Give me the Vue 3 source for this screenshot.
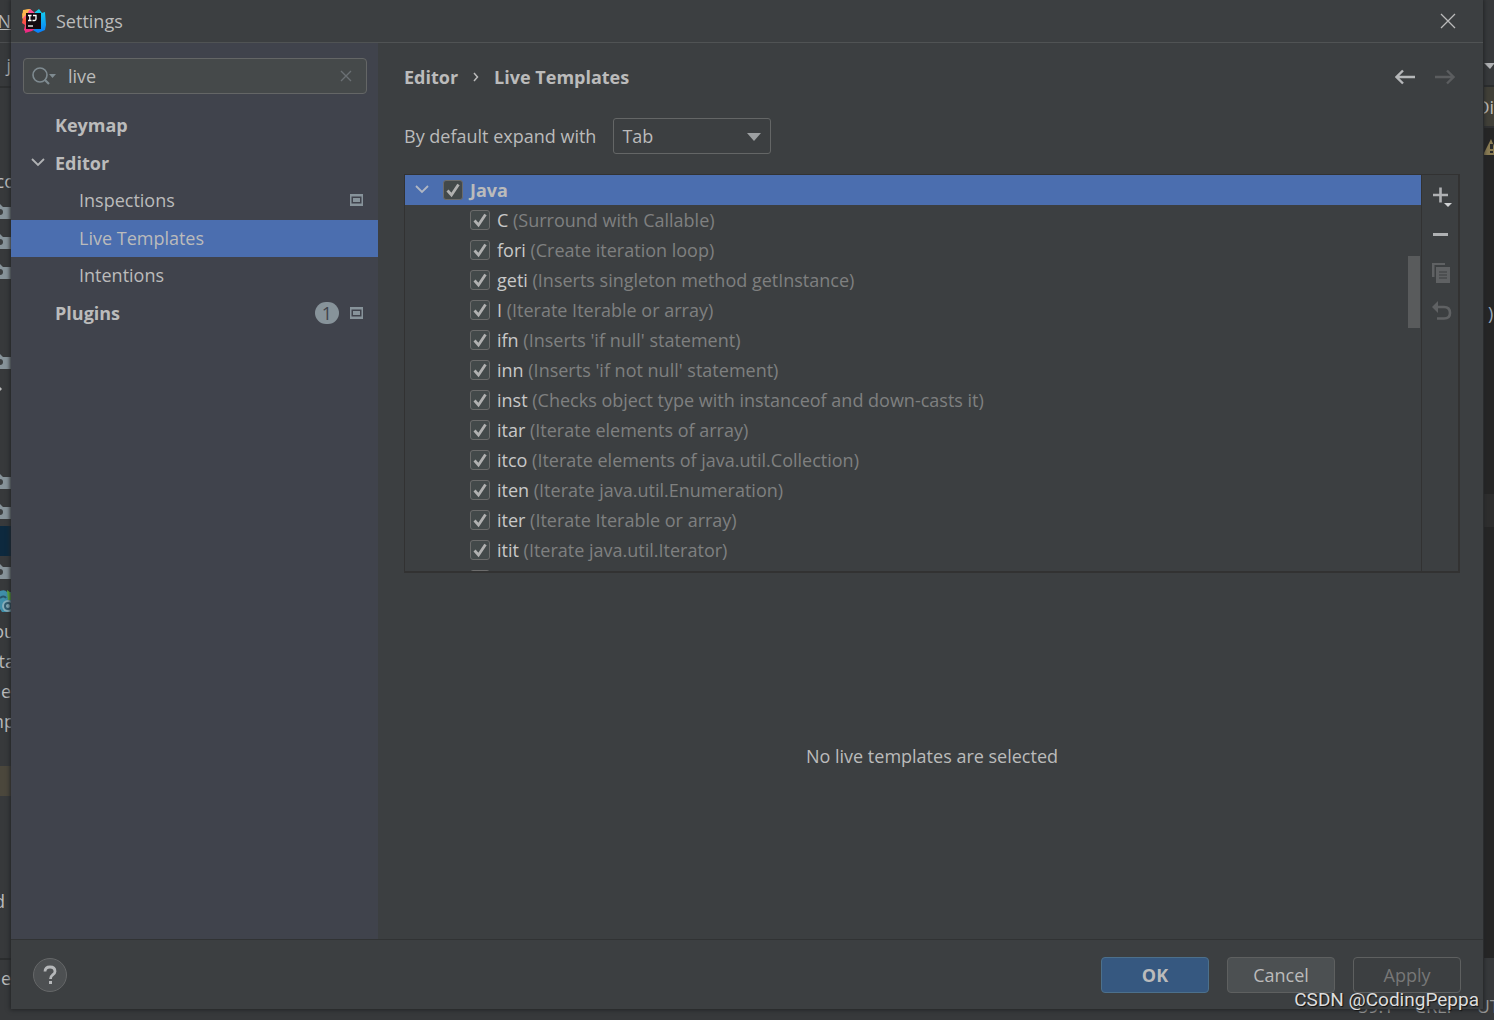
<script setup>
import { ref, reactive } from 'vue'

const query = ref('live')
const expandKey = ref('Tab')
const javaOn = ref(true)

const templates = reactive([
  ['C', 'Surround with Callable'],
  ['fori', 'Create iteration loop'],
  ['geti', 'Inserts singleton method getInstance'],
  ['I', 'Iterate Iterable or array'],
  ['ifn', "Inserts 'if null' statement"],
  ['inn', "Inserts 'if not null' statement"],
  ['inst', 'Checks object type with instanceof and down-casts it'],
  ['itar', 'Iterate elements of array'],
  ['itco', 'Iterate elements of java.util.Collection'],
  ['iten', 'Iterate java.util.Enumeration'],
  ['iter', 'Iterate Iterable or array'],
  ['itit', 'Iterate java.util.Iterator'],
  ['itli', 'Iterate elements of java.util.List']
].map(([key, text]) => ({ key, text, on: true })))

const sections = [
  { name: 'Keymap', level: 0 },
  { name: 'Editor', level: 0, open: true },
  { name: 'Inspections', level: 1, project: true },
  { name: 'Live Templates', level: 1, selected: true },
  { name: 'Intentions', level: 1 },
  { name: 'Plugins', level: 0, project: true, count: 1 }
]

// Rows of the project tree in the IDE window behind the dialog
const projectRows = [
  { text: 'co', wide: true }, { icon: 'folder' }, { icon: 'folder' }, { icon: 'folder' }, {}, {},
  { icon: 'folder' }, { icon: 'dot' }, {}, {}, { icon: 'folder' }, { icon: 'folder' },
  { kind: 'current' }, { icon: 'folder' }, { icon: 'class' }, { text: 'ou', wide: true },
  { text: 'sta', wide: true }, { text: 'e' }, { text: 'mp', wide: true }, {},
  { kind: 'library' }, {}, {}, {}, { text: 'd', short: true }
]
</script>

<template>
  <div class="desktop">
    <div class="ide" aria-hidden="true">
      <div class="ide-left">
        <div class="menu"><u>N</u></div>
        <div class="nav">j</div>
        <div class="project">
          <div v-for="(row, i) in projectRows" :key="i" class="prow" :class="[row.kind, { wide: row.wide, short: row.short }]">
            <span v-if="row.text">{{ row.text }}</span>
            <svg v-else-if="row.icon === 'folder'" width="11" height="16" viewBox="0 0 11 16">
              <path d="M0 1L3 4H11V16H0Z" fill="#87939a" /><circle cx="0" cy="9" r="3" fill="#3c3f41" />
            </svg>
            <svg v-else-if="row.icon === 'dot'" width="11" height="16" viewBox="0 0 11 16">
              <path d="M0 4L2 6L0 8Z" fill="#bbb" />
            </svg>
            <svg v-else-if="row.icon === 'class'" width="11" height="24" viewBox="0 0 11 24">
              <path d="M0 2Q5 0 7 3H11V23H2L0 20Z" fill="#3f8ea9" />
              <path d="M7 1L11 4V11H8Z" fill="#62b543" />
              <path d="M0 9Q4 6 6 9" fill="none" stroke="#28556b" stroke-width="2" />
              <circle cx="8" cy="17" r="6" fill="#87aebb" /><circle cx="8" cy="17" r="3" fill="none" stroke="#315c70" stroke-width="2" />
            </svg>
          </div>
        </div>
        <div class="tool">e</div>
      </div>
      <div class="ide-right">
        <div class="run"><svg width="10" height="6" viewBox="0 0 10 6"><path d="M0 0H10V1L6 6Z" fill="#afb1b3" /></svg></div>
        <div class="tab">Di</div>
        <div class="code">
          <svg class="warn" width="10" height="16" viewBox="0 0 10 16"><path d="M7 0L14 16H0V14Z" fill="#8a7c53" /><path d="M6 5h3v5H6zM6 12h3v2H6z" fill="#2b2b2b" /></svg>
          <span class="paren">)</span>
          <div class="caret-line"></div>
        </div>
      </div>
      <div class="status"><span>59:1</span><span>CRLF</span><span>UTF-8</span></div>
    </div>

    <main class="dialog">
      <header class="titlebar">
        <svg class="logo" width="24" height="24" viewBox="0 0 24 24">
          <defs>
            <linearGradient id="lg-left" x1="0" y1="0" x2="0" y2="1"><stop offset="0" stop-color="#fdc94b" /><stop offset=".5" stop-color="#fd5a3d" /><stop offset="1" stop-color="#fe2d8c" /></linearGradient>
            <linearGradient id="lg-right" x1="0" y1="0" x2="0" y2="1"><stop offset="0" stop-color="#15d6ee" /><stop offset="1" stop-color="#087cfa" /></linearGradient>
          </defs>
          <path d="M3 1L8 0L12 4V18L4 23L2 21L3 16L0 14L1 9L0 5Z" fill="url(#lg-left)" />
          <path d="M8 0L13 4L11 9L4 8L1 10L1 5Z" fill="#fc4b94" />
          <path d="M1 1L8 0L5 5L0 10Z" fill="#fdb84e" />
          <path d="M13 3L17 0L20 4L23 3L24 16L23 21L16 24L9 20Z" fill="url(#lg-right)" />
          <path d="M4 18L14 19L10 22L3 24Z" fill="#ee2a83" />
          <rect x="4" y="4" width="15" height="16" fill="#130910" />
          <path d="M6 6.500h3.500M7.800 6.500v5M6 11.500h3.500M11 6.500h3v3.500q0 1.500-1.500 1.500H10.500" fill="none" stroke="#fff" stroke-width="1.300" />
          <path d="M6 17h5" stroke="#fff" stroke-width="1.300" />
        </svg>
        <h1>Settings</h1>
        <button class="icon-btn close" type="button" aria-label="Close">
          <svg width="16" height="16" viewBox="0 0 16 16"><path d="M1 1L15 15M15 1L1 15" stroke="#bbb" stroke-width="1.300" fill="none" /></svg>
        </button>
      </header>

      <div class="body">
        <aside class="sidebar">
          <div class="search">
            <svg width="26" height="20" viewBox="0 0 26 20">
              <circle cx="9" cy="9" r="7" fill="none" stroke="#7f8b91" stroke-width="1.600" />
              <path d="M13.500 13.500L18 18" stroke="#7f8b91" stroke-width="2.200" /><path d="M18 8H25L21.500 12Z" fill="#7f8b91" />
            </svg>
            <input v-model="query" type="text" aria-label="Search settings" />
            <button class="icon-btn" type="button" aria-label="Clear search" @click="query = ''">
              <svg width="12" height="12" viewBox="0 0 12 12"><path d="M1 1L11 11M11 1L1 11" stroke="#6b7074" stroke-width="1.400" /></svg>
            </button>
          </div>
          <nav class="tree">
            <a v-for="s in sections" :key="s.name" href="#" :class="['node', 'level' + s.level, { selected: s.selected }]">
              <svg v-if="s.open" class="chevron" width="14" height="10" viewBox="0 0 14 10"><path d="M1 1L7 7L13 1" fill="none" stroke="#b0b2b4" stroke-width="1.800" /></svg>
              <span class="name">{{ s.name }}</span>
              <span v-if="s.count" class="count">{{ s.count }}</span>
              <svg v-if="s.project" width="13" height="12" viewBox="0 0 13 12"><path d="M0 0H13V12H0Z" fill="#87939a" /><rect x="1.500" y="2.500" width="10" height="7" fill="#40434c" /><rect x="3" y="4" width="7" height="4" fill="#87939a" /></svg>
            </a>
          </nav>
        </aside>

        <section class="content">
          <div class="crumbs">
            <b>Editor</b>
            <svg width="6" height="10" viewBox="0 0 6 10"><path d="M1 1L4.500 5L1 9" fill="none" stroke="#bbb" stroke-width="1.500" /></svg>
            <b>Live Templates</b>
            <div class="history">
              <button class="icon-btn" type="button" aria-label="Back"><svg width="20" height="16" viewBox="0 0 20 16"><path d="M20 8H2M8 1.500L1.500 8L8 14.500" fill="none" stroke="#b5b7b9" stroke-width="2.400" /></svg></button>
              <button class="icon-btn" type="button" aria-label="Forward" disabled><svg width="20" height="16" viewBox="0 0 20 16"><path d="M0 8H18M12 1.500L18.500 8L12 14.500" fill="none" stroke="#5b5d5f" stroke-width="2.400" /></svg></button>
            </div>
          </div>

          <div class="expand">
            <label for="expand">By default expand with</label>
            <div class="combo">
              <select id="expand" v-model="expandKey"><option>Tab</option><option>Enter</option><option>Space</option></select>
              <svg width="14" height="8" viewBox="0 0 14 8"><path d="M0 0H14L7 8Z" fill="#9da0a2" /></svg>
            </div>
          </div>

          <div class="panel">
            <div class="list">
              <div class="item group">
                <svg width="14" height="10" viewBox="0 0 14 10"><path d="M1 1L7 7L13 1" fill="none" stroke="#b0b7c4" stroke-width="1.800" /></svg>
                <label><input v-model="javaOn" type="checkbox" /><b>Java</b></label>
              </div>
              <div v-for="t in templates" :key="t.key" class="item">
                <label><input v-model="t.on" type="checkbox" /><span><span class="key">{{ t.key }}</span> ({{ t.text }})</span></label>
              </div>
              <div class="thumb"></div>
            </div>
            <div class="toolbar">
              <button class="icon-btn" type="button" aria-label="Add"><svg width="20" height="22" viewBox="0 0 20 22"><path d="M1 9H16M8.500 1.500V16.500" stroke="#afb1b3" stroke-width="2.600" /><path d="M12 17H20L16 21Z" fill="#d0d2d4" /></svg></button>
              <button class="icon-btn" type="button" aria-label="Remove"><svg width="20" height="22" viewBox="0 0 20 22"><path d="M1 10.500H16" stroke="#afb1b3" stroke-width="3" /></svg></button>
              <button class="icon-btn" type="button" aria-label="Duplicate" disabled><svg width="20" height="22" viewBox="0 0 20 22"><path d="M0 1H13V3H2.500V15H0Z" fill="#5f6163" /><path d="M4 5H18V21H4Z" fill="#5f6163" /><path d="M7 10H15M7 13H15M7 16H15" stroke="#3c3f41" /></svg></button>
              <button class="icon-btn" type="button" aria-label="Revert" disabled><svg width="20" height="22" viewBox="0 0 20 22"><path d="M4 7H12Q18 7 18 13Q18 18.500 12 18.500H5" fill="none" stroke="#5f6163" stroke-width="2.600" /><path d="M0 7L6 1V13Z" fill="#5f6163" /></svg></button>
            </div>
          </div>

          <p class="empty">No live templates are selected</p>
        </section>
      </div>

      <footer class="actions">
        <button class="help" type="button" aria-label="Help"><svg width="14" height="20" viewBox="0 0 14 20"><path d="M2 6.500Q2 2 7 2T12 6.500Q12 8.500 9.500 10Q7.500 11.500 7.500 14" fill="none" stroke="#b6b8ba" stroke-width="2.800" /><path d="M6 16h3v3H6z" fill="#b6b8ba" /></svg></button>
        <button class="btn primary" type="button">OK</button>
        <button class="btn" type="button">Cancel</button>
        <button class="btn" type="button" disabled>Apply</button>
      </footer>
    </main>

    <div class="watermark">CSDN @CodingPeppa</div>
  </div>
</template>

<style>
body { background: #3c3f41; }
</style>

<style scoped>
* { box-sizing: border-box; }
.desktop {
  position: relative;
  min-height: 100vh;
  padding: 0 11px 11px 11px;
  display: flex;
  overflow: hidden;
  background: #37393b;
  color: #bbb;
  font: 18px/24px "Open Sans", "Noto Sans", sans-serif;
}
button, input, select { font: inherit; color: inherit; }
svg { display: block; flex: none; }

/* IDE window behind the dialog */
.ide { position: absolute; inset: 0; display: flex; justify-content: space-between; }
.ide-left { width: 16px; display: flex; flex-direction: column; }
.menu, .nav, .prow, .tool { width: 11px; display: flex; align-items: center; justify-content: flex-end; overflow: hidden; }
.menu { height: 43px; border-bottom: 1px solid #4b4d4f; }
.nav { height: 45px; border-bottom: 2px solid #2d2f30; }
.project { flex: 1; padding-top: 78px; border-bottom: 2px solid #2b2d2e; }
.prow { height: 30px; }
.prow.wide { width: 15px; }
.prow.short { width: 5px; }
.prow.current { background: #0d293e; }
.prow.library { background: #4b473c; }
.tool { height: 60px; padding-bottom: 24px; }
.ide-right { width: 10px; display: flex; flex-direction: column; overflow: hidden; }
.run { height: 87px; padding-top: 63px; border-bottom: 2px solid #2b2d2e; }
.tab { height: 41px; display: flex; align-items: center; justify-content: flex-end; background: #414038; border-bottom: 2px solid #303132; }
.code { flex: 1; display: flex; flex-direction: column; margin-bottom: 62px; background: #262626; }
.warn { margin-top: 11px; }
.paren { margin: 146px 0 169px 4px; color: #9aabbd; }
.caret-line { height: 33px; background: #2e2e2e; }
.status { position: absolute; right: 0; bottom: 0; display: flex; gap: 21px; width: 136px; height: 26px; overflow: hidden; color: #999; }

/* Dialog window */
.dialog { position: relative; flex: 1; min-width: 0; display: flex; flex-direction: column; background: #3c3f41; box-shadow: 0 0 4px 1px #222426; }
.titlebar { height: 43px; padding: 0 27px 0 11px; display: flex; align-items: center; gap: 10px; border-bottom: 1px solid #505354; }
.titlebar h1 { margin: 0; font-size: 18px; font-weight: 400; }
.close { margin-left: auto; }
.icon-btn { display: flex; padding: 0; border: 0; background: none; }
.body { flex: 1; display: flex; min-height: 0; }

.sidebar { width: 367px; padding-top: 15px; background: #40434c; }
.search { height: 36px; margin: 0 11px 0 12px; padding: 0 14px 0 7px; display: flex; align-items: center; gap: 11px; border: 1px solid #646666; border-radius: 4px; background: #45494a; }
.search input { flex: 1; min-width: 0; padding: 0; border: 0; outline: 0; background: none; }
.tree { height: 225px; margin-top: 13px; display: grid; grid-auto-rows: 1fr; }
.node { position: relative; display: flex; align-items: center; gap: 11px; padding: 0 15px 1px 44px; color: #bbb; text-decoration: none; }
.node.level0 { font-weight: 700; }
.node.level1 { padding-left: 68px; }
.node.selected { background: #4b6eaf; }
.name { flex: 1; }
.chevron { position: absolute; left: 20px; }
.count { width: 24px; height: 22px; border-radius: 11px; background: #87939a; color: #40434c; font-weight: 400; line-height: 22px; text-align: center; }

.content { flex: 1; min-width: 0; padding: 22px 23px 0 26px; display: flex; flex-direction: column; }
.crumbs { display: flex; align-items: center; gap: 15px; height: 24px; }
.crumbs b, .group b { font-weight: 700; }
.history { display: flex; gap: 20px; margin: 0 5px 0 auto; }
.expand { display: flex; align-items: center; gap: 17px; height: 36px; margin-top: 29px; }
.combo { position: relative; width: 158px; }
.combo select { width: 100%; height: 36px; padding: 0 8px; appearance: none; border: 1px solid #646666; border-radius: 3px; background: #3c3f41; }
.combo svg { position: absolute; right: 10px; top: 15px; pointer-events: none; }

.panel { display: flex; height: 399px; margin-top: 20px; border: 1px solid #323232; border-right-width: 2px; border-bottom-width: 2px; }
.list { position: relative; flex: 1; min-width: 0; overflow: hidden; }
.item { display: flex; align-items: center; height: 30px; padding-left: 65px; color: #7f8080; white-space: nowrap; }
.item label { display: flex; align-items: center; gap: 7px; }
.item.group { gap: 14px; padding-left: 10px; background: #4b6eaf; color: #bbb; }
.key { color: #c8c8c8; }
.item input { appearance: none; width: 20px; height: 20px; margin: 0; border: 1px solid #6b6b6b; border-radius: 3px; background: #43494a; }
.item input:checked { background: #43494a url("data:image/svg+xml,%3Csvg xmlns='http://www.w3.org/2000/svg' viewBox='0 0 18 18'%3E%3Cpath d='M3.500 9.500L7.500 14L14.500 3.500' fill='none' stroke='%23b0b0b0' stroke-width='2.800'/%3E%3C/svg%3E") center / 18px no-repeat; }
.thumb { position: absolute; right: 1px; top: 81px; width: 12px; height: 72px; background: #595b5c; }
.toolbar { display: flex; flex-direction: column; gap: 16px; width: 37px; padding: 11px 0 0 10px; border-left: 1px solid #323232; }

.empty { flex: 1; display: flex; align-items: center; justify-content: center; margin: 0; }
.actions { height: 70px; padding: 0 22px; display: flex; align-items: center; gap: 18px; border-top: 1px solid #313334; }
.help { display: flex; align-items: center; justify-content: center; width: 34px; height: 34px; margin-right: auto; padding: 0; border: 1px solid #656768; border-radius: 50%; background: #4d5052; }
.btn { width: 108px; height: 36px; padding: 0; border: 1px solid #5e6060; border-radius: 4px; background: #4c5052; }
.btn.primary { border-color: #4c708c; background: #365880; font-weight: 700; }
.btn:disabled { background: none; color: #777; }

.watermark { position: absolute; right: 15px; bottom: 8px; color: #ddd; font: 19px/24px Roboto, sans-serif; text-shadow: 1px 1px 1px #111; }
</style>
